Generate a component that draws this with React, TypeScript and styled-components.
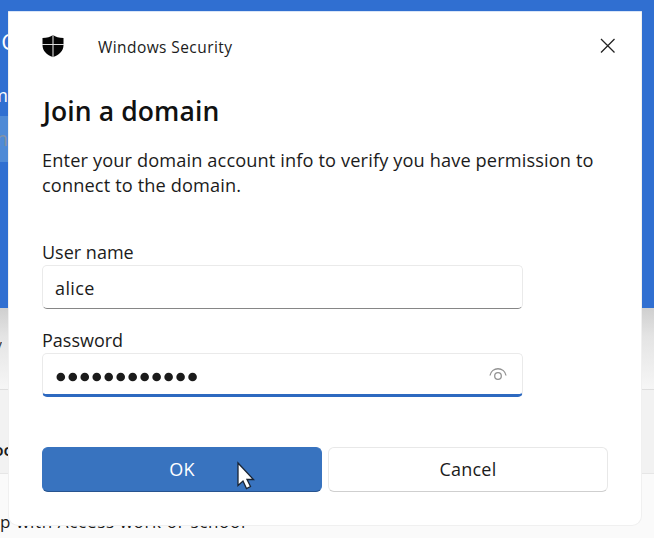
import React from "react";
import styled, { createGlobalStyle } from "styled-components";

const GlobalStyle = createGlobalStyle`
  * { box-sizing: border-box; }
  body { margin: 0; overflow: hidden; font-family: "Open Sans", "Noto Sans", sans-serif; color: #1b1b1b; }
`;

const Desktop = styled.div`
  position: relative;
  width: 654px;
  height: 538px;
  overflow: hidden;
  display: flex;
  flex-direction: column;
  background: #fafafa;
`;

const Banner = styled.div`
  height: 308px;
  padding-top: 26px;
  background: #306fd1;
  color: #fff;
`;

const Clip = styled.div<{ $size: number; $h: number; $w?: number; $weight?: number; $gap?: number; $color?: string }>`
  width: ${(p) => p.$w ?? 8}px;
  height: ${(p) => p.$h}px;
  margin-bottom: ${(p) => p.$gap ?? 0}px;
  display: flex;
  justify-content: flex-end;
  overflow: hidden;
  white-space: nowrap;
  line-height: ${(p) => p.$h}px;
  font-size: ${(p) => p.$size}px;
  font-weight: ${(p) => p.$weight ?? 400};
  color: ${(p) => p.$color ?? "inherit"};
`;

const BannerField = styled.div`
  width: 60px;
  height: 46px;
  padding-top: 10px;
  background: #4f8ad6;
`;

const Band = styled.div<{ $h: number; $bg: string; $line: string; $pad: number }>`
  height: ${(p) => p.$h}px;
  padding-top: ${(p) => p.$pad}px;
  background: ${(p) => p.$bg};
  border-bottom: 1px solid ${(p) => p.$line};
`;

const FooterText = styled.div`
  height: 63px;
  padding-top: 35px;
  font-size: 17px;
  line-height: 26px;
  white-space: nowrap;
  letter-spacing: 0.67px;
`;

const Dialog = styled.section`
  position: absolute;
  left: 8px;
  top: 11px;
  width: 634px;
  height: 515px;
  padding: 0 25px 0 33px;
  display: flex;
  flex-direction: column;
  background: #fff;
  border: 1px solid #f0f0f0;
  border-top-color: #d9e5f7;
  border-radius: 1px 1px 10px 10px;
`;

const Header = styled.header`
  height: 70px;
  display: flex;
  align-items: center;
`;

const HeaderTitle = styled.span`
  flex: 1;
  margin-left: 34px;
  font-size: 15.5px;
  line-height: 22px;
  letter-spacing: 0.42px;
`;

const IconButton = styled.button`
  display: flex;
  padding: 0;
  margin-top: -2px;
  border: 0;
  background: transparent;
`;

const Title = styled.h1`
  margin: 9px 0 0 1px;
  font-size: 26.5px;
  line-height: 40px;
  font-weight: 600;
  letter-spacing: 0.1px;
  color: #111;
`;

const Message = styled.p`
  margin: 17px 0 0;
  font-size: 18.2px;
  line-height: 25px;
  white-space: nowrap;
  letter-spacing: 0.13px;
`;

const Label = styled.label<{ $top: number }>`
  margin-top: ${(p) => p.$top}px;
  font-size: 18px;
  line-height: 25px;
  height: 25px;
`;

const Field = styled.div<{ $focused?: boolean }>`
  width: 481px;
  height: 44px;
  padding: ${(p) => (p.$focused ? 2 : 2)}px 15px 0 12px;
  display: flex;
  align-items: center;
  justify-content: space-between;
  border: 1px solid #eaeaea;
  border-bottom: ${(p) => (p.$focused ? "3px solid #2d69c0" : "1px solid #868686")};
  border-radius: 5px;
  font-size: 18px;
  letter-spacing: 0.4px;
`;

const Actions = styled.div`
  margin-top: 50px;
  display: flex;
  gap: 6px;
`;

const Button = styled.button<{ $primary?: boolean }>`
  width: 280px;
  height: 45px;
  padding: 0 0 1px;
  border: 1px solid ${(p) => (p.$primary ? "#3873bf" : "#e8e8e8")};
  border-bottom-color: ${(p) => (p.$primary ? "#27548f" : "#cfcfcf")};
  border-radius: 6px;
  background: ${(p) => (p.$primary ? "#3873bf" : "#fff")};
  color: ${(p) => (p.$primary ? "#fff" : "#1b1b1b")};
  font: 400 18px "Open Sans", "Noto Sans", sans-serif;
  letter-spacing: 0.2px;
`;

const Pointer = styled.svg`
  position: absolute;
  left: 236px;
  top: 461px;
`;

const Shield = () => (
  <svg width="22" height="24" viewBox="0 0 22 24">
    <path d="M11 0C8.500 2 5 3 0.500 3V10C0.500 16 5 20 11 22C17 20 21.500 16 21.500 10V3C17 3 13.500 2 11 0Z" fill="#050505" />
    <path d="M11 0V22.500M0 9.500H22" stroke="#ddd" strokeWidth="1.100" />
  </svg>
);

const Close = () => (
  <svg width="16" height="16" viewBox="0 0 16 16">
    <path d="M1 1L14.500 14.500M14.500 1L1 14.500" stroke="#222" strokeWidth="1.300" />
  </svg>
);

const Eye = () => (
  <svg width="18" height="14" viewBox="0 0 18 14" fill="none" stroke="#929292" strokeWidth="1.300">
    <path d="M1 7.500C2.500 -1.500 15.500 -1.500 17 7.500" />
    <circle cx="9" cy="8" r="3.300" />
  </svg>
);

const DotRow = styled.svg`
  margin-top: 4px;
`;

const Dots = () => (
  <DotRow width="144" height="10" viewBox="0 0 144 10" fill="#1b1b1b">
    {Array.from({ length: 12 }, (_, i) => (
      <circle key={i} cx={5.800 + i * 11.980} cy="5" r="4.300" />
    ))}
  </DotRow>
);

export default function App() {
  return (
    <>
      <GlobalStyle />
      <Desktop>
        <Banner>
          <Clip $size={22} $h={30} $w={15} $gap={25}>C</Clip>
          <Clip $size={18} $h={28} $gap={7}>m</Clip>
          <BannerField>
            <Clip $size={20} $h={26} $color="#8292a8">m</Clip>
          </BannerField>
        </Banner>
        <Band $h={82} $bg="linear-gradient(#cfcfcf, #e4e4e4 35%, #f6f6f6)" $line="#dedede" $pad={24}>
          <Clip $size={17} $h={26} $w={2} $color="#444">y</Clip>
        </Band>
        <Band $h={84} $bg="#f2f2f2" $line="#e6e6e6" $pad={47}>
          <Clip $size={17} $h={26} $w={12} $weight={600}>oc</Clip>
        </Band>
        <FooterText>p with Access work or school</FooterText>
        <Dialog>
          <Header>
            <Shield />
            <HeaderTitle>Windows Security</HeaderTitle>
            <IconButton aria-label="Close"><Close /></IconButton>
          </Header>
          <Title>Join a domain</Title>
          <Message>
            Enter your domain account info to verify you have permission to
            <br />
            connect to the domain.
          </Message>
          <Label $top={42}>User name</Label>
          <Field>alice</Field>
          <Label $top={19}>Password</Label>
          <Field $focused>
            <Dots />
            <Eye />
          </Field>
          <Actions>
            <Button $primary>OK</Button>
            <Button>Cancel</Button>
          </Actions>
        </Dialog>
        <Pointer width="20" height="30" viewBox="0 0 20 30">
          <path d="M2 2V24.500L7 20L10.500 27.500L14.500 25.500L11 18.500H17.500Z" fill="#fff" stroke="#1a2433" strokeWidth="1.300" />
        </Pointer>
      </Desktop>
    </>
  );
}
